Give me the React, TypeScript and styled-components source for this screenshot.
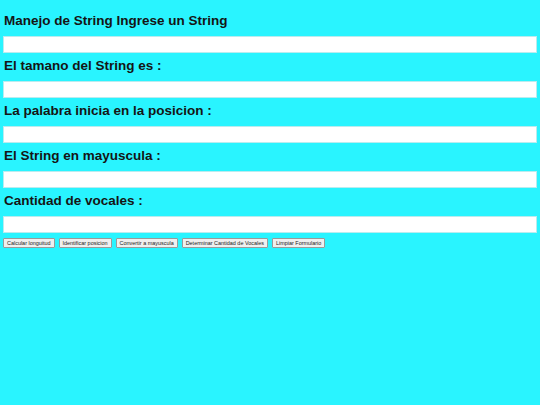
import React from 'react';
import styled, { createGlobalStyle } from 'styled-components';

const GlobalStyle = createGlobalStyle`
	html, body {
		margin: 0;
		padding: 0;
		background: #29f4ff;
	}
	body {
		font-family: 'Liberation Sans', Arial, sans-serif;
	}
`;

const fields = [
	'Manejo de String Ingrese un String',
	'El tamano del String es :',
	'La palabra inicia en la posicion :',
	'El String en mayuscula :',
	'Cantidad de vocales :',
];

const actions = [
	'Calcular longuitud',
	'Identificar posicion',
	'Convertir a mayuscula',
	'Determinar Cantidad de Vocales',
	'Limpiar Formulario',
];

export default function App() {
	return (
		<>
			<GlobalStyle />
			<Page>
				{fields.map((label) => (
					<Field key={label}>
						<Label>{label}</Label>
						<Input type="text" />
					</Field>
				))}
				<ButtonsRow>
					{actions.map((text) => (
						<Action key={text} type="button">
							{text}
						</Action>
					))}
				</ButtonsRow>
			</Page>
		</>
	);
}

const Page = styled.div`
	padding: 8px 3px 0 3px;
	display: flex;
	flex-direction: column;
`;

const Field = styled.div`
	display: flex;
	flex-direction: column;
`;

const Label = styled.h2`
	margin: 4px 0 6px 1px;
	font-size: 13.5px;
	line-height: 18px;
	font-weight: bold;
	color: #151515;
`;

const Input = styled.input`
	box-sizing: border-box;
	width: 100%;
	height: 17px;
	margin: 0;
	padding: 0 2px;
	background: #fff;
	border: 1px solid #b9ecef;
	outline: none;
`;

const ButtonsRow = styled.div`
	display: flex;
	gap: 4px;
	margin-top: 5px;
`;

const Action = styled.button`
	box-sizing: border-box;
	height: 10px;
	padding: 0 3px;
	font-family: 'Liberation Sans', Arial, sans-serif;
	font-size: 5.45px;
	line-height: 8px;
	color: #222;
	background: #efefef;
	border: 1px solid #9a9a9a;
	border-radius: 1px;
	white-space: nowrap;
`;
